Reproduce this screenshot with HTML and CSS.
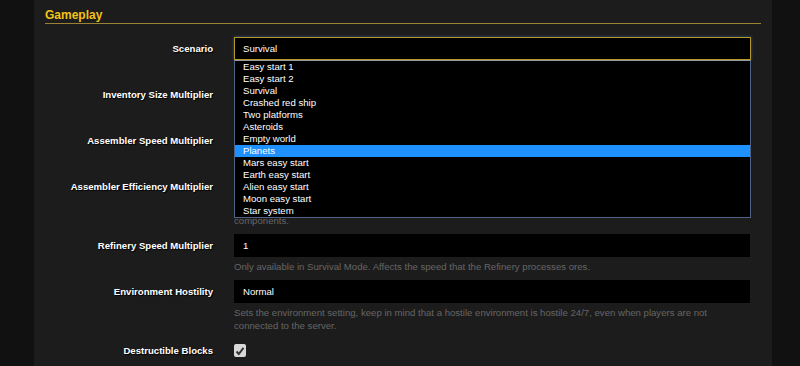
FILE: index.html
```html
<!DOCTYPE html>
<html lang="en">
<head>
  <meta charset="UTF-8" />
  <title>Server Config - Gameplay</title>
  <link rel="stylesheet" href="styles.css">
</head>
<body>
  <div class="panel">
    <h2 class="section-title">Gameplay</h2>

    <div class="row">
      <label class="row-label">Scenario</label>
      <div class="field">
        <div class="select open">
          <div class="select-value">Survival</div>
          <ul class="select-list">
            <li>Easy start 1</li>
            <li>Easy start 2</li>
            <li>Survival</li>
            <li>Crashed red ship</li>
            <li>Two platforms</li>
            <li>Asteroids</li>
            <li>Empty world</li>
            <li class="active">Planets</li>
            <li>Mars easy start</li>
            <li>Earth easy start</li>
            <li>Alien easy start</li>
            <li>Moon easy start</li>
            <li>Star system</li>
          </ul>
        </div>
        <p class="help">The scenario that is used when a new world is created.</p>
      </div>
    </div>

    <div class="row">
      <label class="row-label">Inventory Size Multiplier</label>
      <div class="field">
        <div class="input">3</div>
        <p class="help">Only available in Survival Mode. Affects the size of player and block inventories.</p>
      </div>
    </div>

    <div class="row">
      <label class="row-label">Assembler Speed Multiplier</label>
      <div class="field">
        <div class="input">1</div>
        <p class="help">Only available in Survival Mode. Affects the speed of the Assemblers.</p>
      </div>
    </div>

    <div class="row">
      <label class="row-label">Assembler Efficiency Multiplier</label>
      <div class="field">
        <div class="input">1</div>
        <p class="help">Only available in Survival Mode. Affects the amount of materials that an Assembler uses when it is producing blocks and components.</p>
      </div>
    </div>

    <div class="row">
      <label class="row-label">Refinery Speed Multiplier</label>
      <div class="field">
        <div class="input">1</div>
        <p class="help">Only available in Survival Mode. Affects the speed that the Refinery processes ores.</p>
      </div>
    </div>

    <div class="row">
      <label class="row-label">Environment Hostility</label>
      <div class="field">
        <div class="input">Normal</div>
        <p class="help">Sets the environment setting, keep in mind that a hostile environment is hostile 24/7, even when players are not connected to the server.</p>
      </div>
    </div>

    <div class="row">
      <label class="row-label">Destructible Blocks</label>
      <div class="field">
        <span class="check">
          <svg width="10" height="10" viewBox="0 0 10 10"><path d="M1.5 5.5 L3.8 8 L8.5 1.8" fill="none" stroke="#333" stroke-width="2"/></svg>
        </span>
      </div>
    </div>
  </div>
</body>
</html>
```

FILE: styles.css
```css
body {
  margin: 0;
  background: #111;
  font-family: "Liberation Sans", Arial, sans-serif;
  font-size: 9.6px;
  overflow: hidden;
}

.panel {
  margin-left: 34px;
  width: 716px;
  min-height: 366px;
  padding: 0 11px;
  background: #1c1c1c;
}

.section-title {
  margin: 0 0 13px;
  padding: 8px 0 1px;
  font-size: 12px;
  line-height: 14px;
  color: #f2c318;
  border-bottom: 1px solid #9a8235;
}

.row {
  display: grid;
  grid-template-columns: 168px 517px;
  column-gap: 21px;
  margin-bottom: 7px;
}

.row-label {
  text-align: right;
  font-weight: bold;
  color: #fff;
  line-height: 23px;
  text-shadow: 1px 1px 1px #000;
}

.input {
  height: 23px;
  width: 516px;
  box-sizing: border-box;
  padding-left: 9px;
  line-height: 23px;
  background: #000;
  color: #fff;
}

.help {
  margin: 3px 0 0;
  line-height: 13px;
  color: #666;
}

/* select with its list opened */
.select {
  position: relative;
  height: 23px;
  box-sizing: border-box;
  border: 1px solid #b3992c;
  background: #000;
  box-shadow: 0 0 3px rgba(70, 120, 180, 0.6);
}

.select-value {
  padding-left: 8px;
  line-height: 21px;
  color: #fff;
}

.select-list {
  position: absolute;
  top: calc(100% + 1px);
  left: -1px;
  width: 517px;
  box-sizing: border-box;
  margin: 0;
  padding: 0;
  list-style: none;
  background: #000;
  border: 1px solid #4c6385;
  border-top-color: #9a9a9a;
  z-index: 10;
}

.select-list li {
  padding-left: 8px;
  line-height: 12px;
  color: #fff;
}

.select-list li.active {
  background: #1e90ff;
}

.check {
  display: flex;
  align-items: center;
  justify-content: center;
  width: 12px;
  height: 13px;
  margin-top: 5px;
  background: #d8d8d8;
  border-radius: 2px;
}
```
